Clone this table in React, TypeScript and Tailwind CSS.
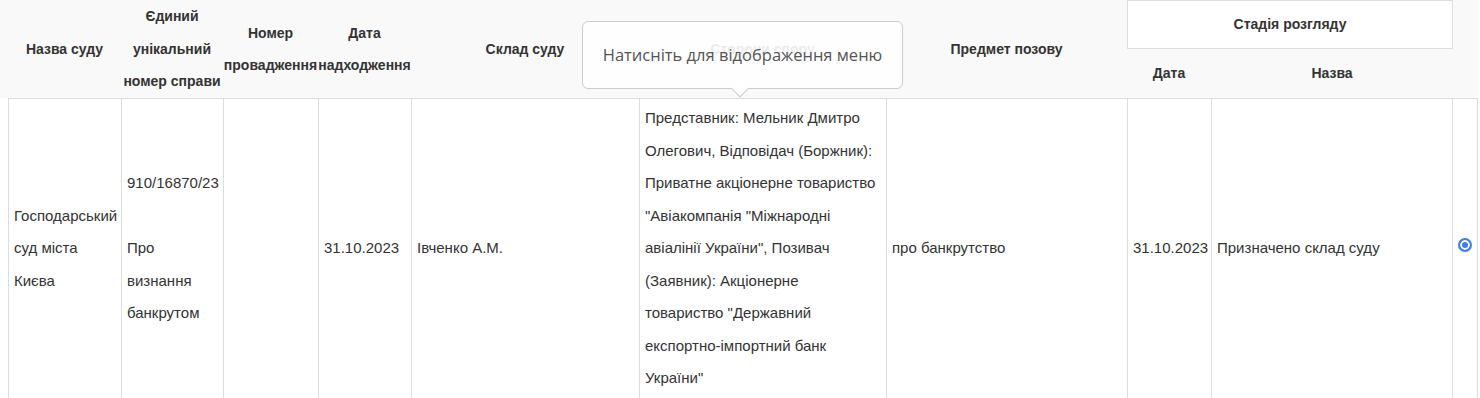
import React from 'react';

const widths = [113, 102, 95, 93, 228, 247, 241];

function HeadCell({ w, children }: { w: number; children?: React.ReactNode }) {
  return (
    <div
      className="flex shrink-0 items-center justify-center text-center"
      style={{ width: w }}
    >
      <div className="whitespace-pre-line">{children}</div>
    </div>
  );
}

function BodyCell({
  w,
  children,
  last,
}: {
  w: number;
  children?: React.ReactNode;
  last?: boolean;
}) {
  return (
    <div
      className={
        'flex shrink-0 items-center border-l border-t border-[#dddddd] px-[5px] py-[3px]' +
        (last ? ' border-r justify-center' : '')
      }
      style={{ width: w }}
    >
      <div>{children}</div>
    </div>
  );
}

export default function App() {
  return (
    <div className="relative h-[398px] w-[1480px] overflow-hidden bg-white font-['Liberation_Sans',Arial,sans-serif] text-[15px] leading-[32.5px] text-[#333333]">
      {/* header */}
      <div className="flex h-[98px] w-[1478px] bg-[#f9f9f9] pl-2 text-[14px] font-bold">
        <HeadCell w={widths[0]}>Назва суду</HeadCell>
        <HeadCell w={widths[1]}>{'Єдиний\nунікальний\nномер справи'}</HeadCell>
        <HeadCell w={widths[2]}>
          <span className="-mx-3 block">Номер провадження</span>
        </HeadCell>
        <HeadCell w={widths[3]}>
          <span className="-mx-3 block">Дата надходження</span>
        </HeadCell>
        <HeadCell w={widths[4]}>Склад суду</HeadCell>
        <HeadCell w={widths[5]}>Сторони спору</HeadCell>
        <HeadCell w={widths[6]}>Предмет позову</HeadCell>
        <div className="flex w-[326px] shrink-0 flex-col">
          <div className="flex h-[49px] items-center justify-center border border-[#dddddd] bg-white">
            Стадія розгляду
          </div>
          <div className="flex h-[49px]">
            <div className="flex w-[84px] items-center justify-center">Дата</div>
            <div className="flex flex-1 items-center justify-center">Назва</div>
          </div>
        </div>
        <div className="w-[25px] shrink-0" />
      </div>

      {/* body */}
      <div className="flex h-[300px] pl-2">
        <BodyCell w={widths[0]}>
          Господарський
          <br />
          суд міста
          <br />
          Києва
        </BodyCell>
        <BodyCell w={widths[1]}>
          910/16870/23
          <br />
          <br />
          Про
          <br />
          визнання
          <br />
          банкрутом
        </BodyCell>
        <BodyCell w={widths[2]} />
        <BodyCell w={widths[3]}>31.10.2023</BodyCell>
        <BodyCell w={widths[4]}>Івченко А.М.</BodyCell>
        <BodyCell w={widths[5]}>
          Представник: Мельник Дмитро Олегович, Відповідач (Боржник): Приватне
          акціонерне товариство "Авіакомпанія "Міжнародні авіалінії України",
          Позивач (Заявник): Акціонерне товариство "Державний
          експортно-імпортний банк України"
        </BodyCell>
        <BodyCell w={widths[6]}>про банкрутство</BodyCell>
        <BodyCell w={84}>31.10.2023</BodyCell>
        <BodyCell w={241}>Призначено склад суду</BodyCell>
        <BodyCell w={26} last>
          <input
            type="radio"
            defaultChecked
            readOnly
            className="m-0 mb-[7px] block h-[14px] w-[14px] appearance-none rounded-full border-2 border-[#3c7ef2] bg-[#3c7ef2] shadow-[inset_0_0_0_2px_white]"
          />
        </BodyCell>
      </div>

      {/* tooltip */}
      <div className="absolute left-[582px] top-[21px] flex h-[68px] w-[321px] items-center justify-center rounded-md border border-[#cccccc] bg-white/90 font-['Open_Sans',sans-serif] text-[16.5px] leading-normal text-[#555555]">
        Натисніть для відображення меню
        <div className="absolute left-[151px] top-[61px] h-3 w-3 rotate-45 border-b border-r border-[#cccccc] bg-white" />
      </div>
    </div>
  );
}
